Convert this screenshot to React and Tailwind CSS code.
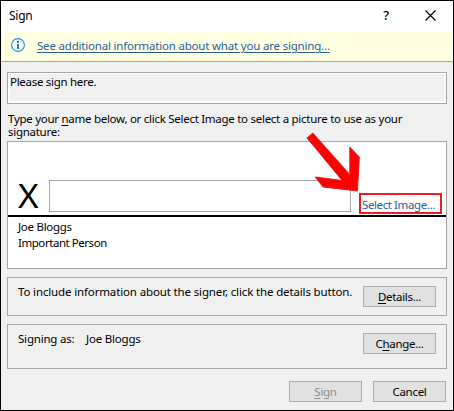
function ActionButton({ children, disabled }) {
  return (
    <button
      className={
        'h-[21px] w-[73px] shrink-0 border border-[#adadb2] bg-[#e1e1e1] text-center leading-[19px] tracking-[-0.3px] ' +
        (disabled ? 'text-[#8d8d92]' : 'text-black')
      }
    >
      {children}
    </button>
  );
}

function Key({ children }) {
  return <span className="underline decoration-1 underline-offset-[2px]">{children}</span>;
}

export default function App() {
  return (
    <div className="relative flex h-[411px] w-[454px] flex-col border border-black bg-[#f0f0f0] font-['Noto_Sans',sans-serif] text-[11.5px] leading-4 whitespace-nowrap text-black">
      <header className="flex h-[30px] shrink-0 items-start justify-between bg-white pt-[7px] pr-[17px] pl-2">
        <span className="text-[12px] tracking-[-0.25px]">Sign</span>
        <div className="flex gap-[36px]">
          <span className="-mt-px text-[13px] font-medium">?</span>
          <svg className="mt-[2px] h-[11px] w-[11px]" viewBox="0 0 11 11" stroke="#000" strokeWidth="1.1">
            <path d="M.5 .5l10 10M10.5 .5l-10 10" />
          </svg>
        </div>
      </header>

      <div className="flex h-[31px] shrink-0 items-start border-b border-[#a6a6a6] bg-[#ffffe1] pt-[7px] pl-[10px]">
        <svg className="h-[14px] w-[14px]" viewBox="0 0 14 14" fill="none">
          <circle cx="7" cy="7" r="6.4" fill="#f7fbf8" stroke="#2a8dd4" strokeWidth="1.1" />
          <path d="M6 3h2v1.700H6zM6 6h2v5H6z" fill="#1f7fc8" />
        </svg>
        <a className="ml-3 tracking-[-0.19px] text-[#2b5f9e] underline decoration-1 underline-offset-[2px]">
          See additional information about what you are signing...
        </a>
      </div>

      <main className="flex flex-col px-[6px] pt-[10px]">
        <div className="h-8 border border-[#a6a6a6] bg-white p-[2px] pr-[1px] pb-[1px]">
          <div className="h-full bg-[#f0f0f0]">
            <p className="-mt-[1px] tracking-[-0.29px]">Please sign here.</p>
          </div>
        </div>

        <p className="mt-[8px] pl-[1px] leading-[13px] tracking-[-0.275px]">
          Type your <Key>n</Key>ame below, or click Select Image to select a picture to use as your
          <br />
          signature:
        </p>

        <section className="mt-[3px] flex h-32 flex-col border border-[#a6a6a6] bg-white">
          <div className="flex h-[75px] shrink-0 items-end border-b-2 border-black">
            <span className="w-[41px] pl-[10px] text-[32px] leading-[38px]">
              <span className="inline-block origin-left scale-x-[1.1]">X</span>
            </span>
            <input className="mb-[3px] h-8 w-[302px] border border-[#a6a6a6] bg-white" />
            <a className="mb-[1px] ml-2 h-[21px] w-[83px] border-2 border-[#ed1c24] pt-[2px] pl-[1px] tracking-[-0.4px] text-[#2b5f9e]">
              Select Image...
            </a>
          </div>
          <p className="mt-[2px] pl-[10px] tracking-[-0.28px]">Joe Bloggs</p>
          <p className="pl-[10px] tracking-[-0.45px]">Important Person</p>
        </section>

        <section className="mt-2 flex h-[39px] items-start justify-between border border-[#a6a6a6] pt-2 pr-[10px] pl-[10px]">
          <span className="-mt-[2px] tracking-[-0.14px]">To include information about the signer, click the details button.</span>
          <ActionButton><Key>D</Key>etails...</ActionButton>
        </section>

        <section className="mt-2 flex h-[45px] items-start border border-[#a6a6a6] pt-2 pr-[10px] pl-[10px]">
          <span className="-mt-[2px] w-[68px] tracking-[-0.2px]">Signing as:</span>
          <span className="-mt-[2px] flex-1 tracking-[-0.2px]">Joe Bloggs</span>
          <ActionButton>C<Key>h</Key>ange...</ActionButton>
        </section>

        <footer className="mt-3 flex justify-end gap-[11px] pr-[1px]">
          <ActionButton disabled><Key>S</Key>ign</ActionButton>
          <ActionButton>Cancel</ActionButton>
        </footer>
      </main>

      <svg className="absolute top-[131px] left-[305px] h-[62px] w-[56px]" viewBox="306 132 56 62">
        <path d="M312.800 133L349.800 174.500V147l9.500 10L357.500 191 323 187 315.200 177l27 3.500L307 138z" fill="#ff0000" stroke="#ed1c24" strokeWidth="1" />
      </svg>
    </div>
  );
}
